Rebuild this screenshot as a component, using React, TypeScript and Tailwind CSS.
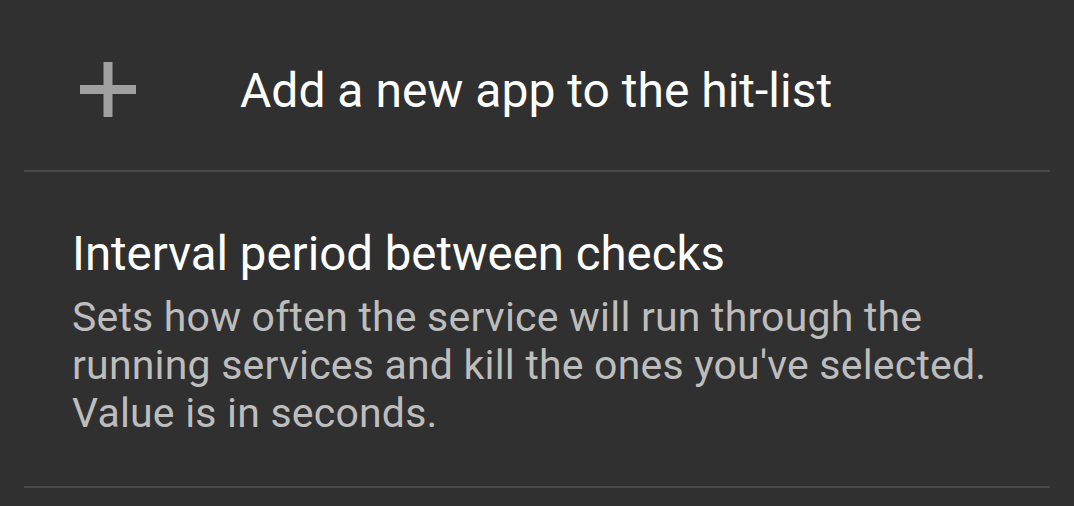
import React from 'react';

export default function App() {
    return (
        <div
            className="h-[506px] w-[1074px] overflow-hidden bg-[#303030]"
            style={{ fontFamily: 'Roboto, "Noto Sans", sans-serif' }}
        >
            {/* Add row */}
            <div className="flex h-[170px] items-start">
                <div className="w-[240px] pl-[80px] pt-[62px]">
                    <svg width="56" height="55" viewBox="0 0 56 55">
                        <rect x="23.5" y="0" width="9" height="55" fill="#a0a0a0" />
                        <rect x="0" y="23" width="56" height="9" fill="#a0a0a0" />
                    </svg>
                </div>
                <span className="pt-[67px] text-[48px] leading-[48px] text-white">Add a new app to the hit-list</span>
            </div>

            <div className="mx-[24px] h-[2px] bg-[#494949]" />

            {/* Interval preference */}
            <div className="h-[314px] pl-[72px] pr-[60px] pt-[54px]">
                <p className="text-[47.4px] leading-[56px] text-white">Interval period between checks</p>
                <p className="mt-[11px] text-[41px] leading-[48px] tracking-[0.2px] text-[#bdbdbd]">
                    Sets how often the service will run through the running services and kill the ones
                    you've selected. Value is in seconds.
                </p>
            </div>

            <div className="mx-[24px] h-[2px] bg-[#494949]" />
        </div>
    );
}
